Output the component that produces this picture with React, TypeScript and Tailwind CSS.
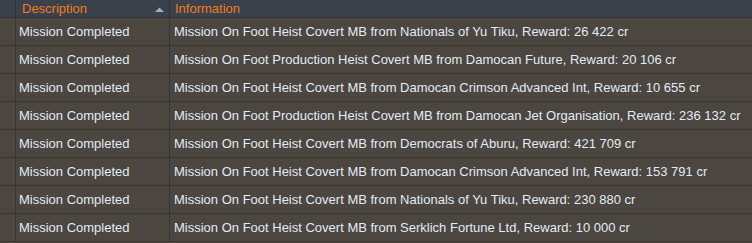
import React from "react";

const rows = [
  "Mission On Foot Heist Covert MB from Nationals of Yu Tiku, Reward: 26 422 cr",
  "Mission On Foot Production Heist Covert MB from Damocan Future, Reward: 20 106 cr",
  "Mission On Foot Heist Covert MB from Damocan Crimson Advanced Int, Reward: 10 655 cr",
  "Mission On Foot Production Heist Covert MB from Damocan Jet Organisation, Reward: 236 132 cr",
  "Mission On Foot Heist Covert MB from Democrats of Aburu, Reward: 421 709 cr",
  "Mission On Foot Heist Covert MB from Damocan Crimson Advanced Int, Reward: 153 791 cr",
  "Mission On Foot Heist Covert MB from Nationals of Yu Tiku, Reward: 230 880 cr",
  "Mission On Foot Heist Covert MB from Serklich Fortune Ltd, Reward: 10 000 cr",
];

export default function App() {
  return (
    <div
      className="w-[752px] h-[243px] overflow-hidden bg-[#4b463f] text-[13px]"
      style={{ fontFamily: '"Liberation Sans", Arial, sans-serif' }}
    >
      <div className="grid grid-cols-[16px_154px_1fr] h-[18px] bg-[#3a414a] border-b border-[#2f3439]">
        <div className="border-r border-[#2f353b]" />
        <div className="relative flex items-center pl-[6px] text-[#f07c22] border-r border-[#2f353b] leading-none">
          Description
          <svg className="absolute right-[5px] top-[7px]" width="9" height="5" viewBox="0 0 9 5">
            <polygon points="0,5 9,5 4.5,0.5" fill="#a7adb3" />
          </svg>
        </div>
        <div className="flex items-center pl-[5px] text-[#f07c22] leading-none">Information</div>
      </div>
      {rows.map((r, i) => (
        <div
          key={i}
          className="grid grid-cols-[16px_154px_1fr] h-[28px] border-b border-[#38342f] text-[#e2ecf4]"
        >
          <div className="border-r border-[#3a3733]" />
          <div className="flex items-center pl-[3px] pt-[1px] border-r border-[#3a3733] whitespace-nowrap">
            Mission Completed
          </div>
          <div className="flex items-center pl-[4px] pt-[1px] whitespace-nowrap">{r}</div>
        </div>
      ))}
    </div>
  );
}
